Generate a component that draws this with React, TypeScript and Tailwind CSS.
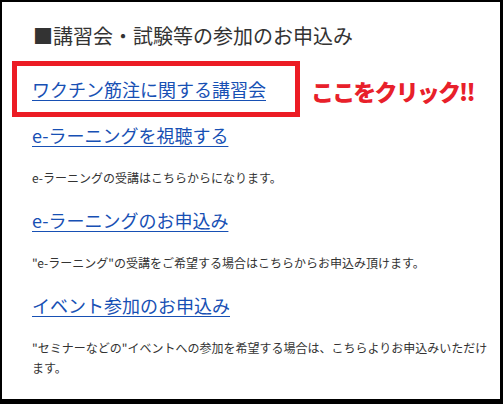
export default function App() {
  const linkCls =
    "text-[18px] leading-[28px] text-[#1750b4] underline underline-offset-[3px] decoration-[1px]"

  return (
    <div className="h-[404px] w-[503px] border-l-2 border-t-2 border-r-[3px] border-b-[5px] border-black bg-white px-[10px] font-['Noto_Sans_CJK_JP',sans-serif] text-[#333]">
      <h2 className="mt-[19px] pl-[21px] text-[20px] leading-[30px] font-normal">
        ■講習会・試験等の参加のお申込み
      </h2>

      <div className="mt-[10px] flex items-center">
        <div className="w-[288px] border-[5px] border-[#ec1c24] py-[9px] pl-[15px]">
          <a href="#" className={linkCls}>
            ワクチン筋注に関する講習会
          </a>
        </div>
        <span className="ml-[11px] mt-[3px] text-[23px] leading-[30px] font-black tracking-[-0.08em] text-[#e8202a]">
          ここをクリック!!
        </span>
      </div>

      <div className="pl-[20px]">
        <p className="mt-[4px]">
          <a href="#" className={linkCls}>
            e-ラーニングを視聴する
          </a>
        </p>
        <p className="mt-[19px] text-[12px] leading-[20px]">
          e-ラーニングの受講はこちらからになります。
        </p>

        <p className="mt-[18px]">
          <a href="#" className={linkCls}>
            e-ラーニングのお申込み
          </a>
        </p>
        <p className="mt-[19px] text-[12px] leading-[20px]">
          "e-ラーニング"の受講をご希望する場合はこちらからお申込み頂けます。
        </p>

        <p className="mt-[18px]">
          <a href="#" className={linkCls}>
            イベント参加のお申込み
          </a>
        </p>
        <p className="mt-[19px] text-[12px] leading-[20px]">
          "セミナーなどの"イベントへの参加を希望する場合は、こちらよりお申込みいただけます。
        </p>
      </div>
    </div>
  )
}
